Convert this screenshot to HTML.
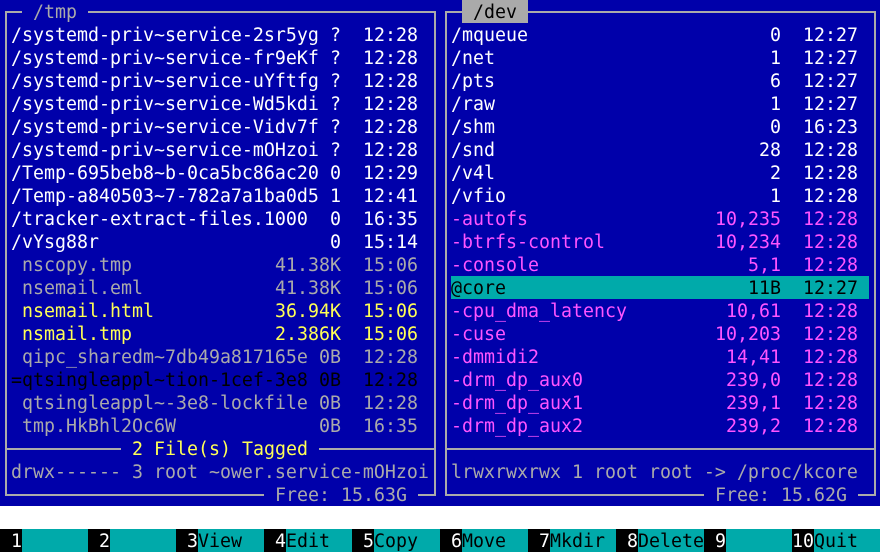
<!DOCTYPE html>
<html><head><meta charset="utf-8"><style>
*{margin:0;padding:0}
body{width:880px;height:552px;background:#fff;position:relative;overflow:hidden;font-family:"DejaVu Sans Mono","Liberation Mono",monospace;font-size:18.27px;line-height:25px}
#blue{position:absolute;left:0;top:0;width:880px;height:506px;background:#0000aa}
.t{position:absolute;height:23px;white-space:pre;overflow:hidden}
.h{position:absolute;height:2px;background:#aaa}
.v{position:absolute;width:2px;background:#aaa}
.w{color:#fff}.g{color:#aaa}.y{color:#ffff55}.m{color:#ff55ff}.k{color:#000}
#bar{position:absolute;left:0;top:529px;width:880px;height:23px}
#bar span{position:absolute;top:0;height:23px;white-space:pre;overflow:hidden}
.n{background:#000;color:#fff}.l{background:#00aaaa;color:#000}
</style></head><body>
<div id="blue"></div>
<div class="h" style="left:5px;top:11px;width:431px"></div>
<div class="h" style="left:5px;top:448px;width:431px"></div>
<div class="h" style="left:5px;top:494px;width:431px"></div>
<div class="v" style="left:5px;top:11px;height:485px"></div>
<div class="v" style="left:434px;top:11px;height:485px"></div>
<div class="h" style="left:445px;top:11px;width:431px"></div>
<div class="h" style="left:445px;top:448px;width:431px"></div>
<div class="h" style="left:445px;top:494px;width:431px"></div>
<div class="v" style="left:445px;top:11px;height:485px"></div>
<div class="v" style="left:874px;top:11px;height:485px"></div>

<div class="t g" style="left:22px;top:0;background:#0000aa"> /tmp </div>
<div class="t k" style="left:462px;top:0;background:#aaa"> /dev </div>

<div class="t w" style="left:11px;top:23px">/systemd-priv~service-2sr5yg</div><div class="t w" style="left:330px;top:23px">?</div><div class="t w" style="left:363px;top:23px">12:28</div>
<div class="t w" style="left:11px;top:46px">/systemd-priv~service-fr9eKf</div><div class="t w" style="left:330px;top:46px">?</div><div class="t w" style="left:363px;top:46px">12:28</div>
<div class="t w" style="left:11px;top:69px">/systemd-priv~service-uYftfg</div><div class="t w" style="left:330px;top:69px">?</div><div class="t w" style="left:363px;top:69px">12:28</div>
<div class="t w" style="left:11px;top:92px">/systemd-priv~service-Wd5kdi</div><div class="t w" style="left:330px;top:92px">?</div><div class="t w" style="left:363px;top:92px">12:28</div>
<div class="t w" style="left:11px;top:115px">/systemd-priv~service-Vidv7f</div><div class="t w" style="left:330px;top:115px">?</div><div class="t w" style="left:363px;top:115px">12:28</div>
<div class="t w" style="left:11px;top:138px">/systemd-priv~service-mOHzoi</div><div class="t w" style="left:330px;top:138px">?</div><div class="t w" style="left:363px;top:138px">12:28</div>
<div class="t w" style="left:11px;top:161px">/Temp-695beb8~b-0ca5bc86ac20</div><div class="t w" style="left:330px;top:161px">0</div><div class="t w" style="left:363px;top:161px">12:29</div>
<div class="t w" style="left:11px;top:184px">/Temp-a840503~7-782a7a1ba0d5</div><div class="t w" style="left:330px;top:184px">1</div><div class="t w" style="left:363px;top:184px">12:41</div>
<div class="t w" style="left:11px;top:207px">/tracker-extract-files.1000</div><div class="t w" style="left:330px;top:207px">0</div><div class="t w" style="left:363px;top:207px">16:35</div>
<div class="t w" style="left:11px;top:230px">/vYsg88r</div><div class="t w" style="left:330px;top:230px">0</div><div class="t w" style="left:363px;top:230px">15:14</div>
<div class="t g" style="left:11px;top:253px"> nscopy.tmp</div><div class="t g" style="left:275px;top:253px">41.38K</div><div class="t g" style="left:363px;top:253px">15:06</div>
<div class="t g" style="left:11px;top:276px"> nsemail.eml</div><div class="t g" style="left:275px;top:276px">41.38K</div><div class="t g" style="left:363px;top:276px">15:06</div>
<div class="t y" style="left:11px;top:299px"> nsemail.html</div><div class="t y" style="left:275px;top:299px">36.94K</div><div class="t y" style="left:363px;top:299px">15:06</div>
<div class="t y" style="left:11px;top:322px"> nsmail.tmp</div><div class="t y" style="left:275px;top:322px">2.386K</div><div class="t y" style="left:363px;top:322px">15:06</div>
<div class="t g" style="left:11px;top:345px"> qipc_sharedm~7db49a817165e</div><div class="t g" style="left:319px;top:345px">0B</div><div class="t g" style="left:363px;top:345px">12:28</div>
<div class="t k" style="left:11px;top:368px">=qtsingleappl~tion-1cef-3e8</div><div class="t k" style="left:319px;top:368px">0B</div><div class="t k" style="left:363px;top:368px">12:28</div>
<div class="t g" style="left:11px;top:391px"> qtsingleappl~-3e8-lockfile</div><div class="t g" style="left:319px;top:391px">0B</div><div class="t g" style="left:363px;top:391px">12:28</div>
<div class="t g" style="left:11px;top:414px"> tmp.HkBhl2Oc6W</div><div class="t g" style="left:319px;top:414px">0B</div><div class="t g" style="left:363px;top:414px">16:35</div>

<div class="t y" style="left:121px;top:437px;background:#0000aa"> 2 File(s) Tagged </div>
<div class="t g" style="left:11px;top:460px">drwx------ 3 root ~ower.service-mOHzoi</div>
<div class="t g" style="left:264px;top:483px;background:#0000aa"> Free: 15.63G </div>

<div class="t w" style="left:451px;top:23px">/mqueue</div><div class="t w" style="left:770px;top:23px">0</div><div class="t w" style="left:803px;top:23px">12:27</div>
<div class="t w" style="left:451px;top:46px">/net</div><div class="t w" style="left:770px;top:46px">1</div><div class="t w" style="left:803px;top:46px">12:27</div>
<div class="t w" style="left:451px;top:69px">/pts</div><div class="t w" style="left:770px;top:69px">6</div><div class="t w" style="left:803px;top:69px">12:27</div>
<div class="t w" style="left:451px;top:92px">/raw</div><div class="t w" style="left:770px;top:92px">1</div><div class="t w" style="left:803px;top:92px">12:27</div>
<div class="t w" style="left:451px;top:115px">/shm</div><div class="t w" style="left:770px;top:115px">0</div><div class="t w" style="left:803px;top:115px">16:23</div>
<div class="t w" style="left:451px;top:138px">/snd</div><div class="t w" style="left:759px;top:138px">28</div><div class="t w" style="left:803px;top:138px">12:28</div>
<div class="t w" style="left:451px;top:161px">/v4l</div><div class="t w" style="left:770px;top:161px">2</div><div class="t w" style="left:803px;top:161px">12:28</div>
<div class="t w" style="left:451px;top:184px">/vfio</div><div class="t w" style="left:770px;top:184px">1</div><div class="t w" style="left:803px;top:184px">12:28</div>
<div class="t m" style="left:451px;top:207px">-autofs</div><div class="t m" style="left:715px;top:207px">10,235</div><div class="t m" style="left:803px;top:207px">12:28</div>
<div class="t m" style="left:451px;top:230px">-btrfs-control</div><div class="t m" style="left:715px;top:230px">10,234</div><div class="t m" style="left:803px;top:230px">12:28</div>
<div class="t m" style="left:451px;top:253px">-console</div><div class="t m" style="left:748px;top:253px">5,1</div><div class="t m" style="left:803px;top:253px">12:28</div>
<div class="t k" style="left:451px;top:276px;width:418px;background:#00aaaa">@core</div><div class="t k" style="left:748px;top:276px">11B</div><div class="t k" style="left:803px;top:276px">12:27</div>
<div class="t m" style="left:451px;top:299px">-cpu_dma_latency</div><div class="t m" style="left:726px;top:299px">10,61</div><div class="t m" style="left:803px;top:299px">12:28</div>
<div class="t m" style="left:451px;top:322px">-cuse</div><div class="t m" style="left:715px;top:322px">10,203</div><div class="t m" style="left:803px;top:322px">12:28</div>
<div class="t m" style="left:451px;top:345px">-dmmidi2</div><div class="t m" style="left:726px;top:345px">14,41</div><div class="t m" style="left:803px;top:345px">12:28</div>
<div class="t m" style="left:451px;top:368px">-drm_dp_aux0</div><div class="t m" style="left:726px;top:368px">239,0</div><div class="t m" style="left:803px;top:368px">12:28</div>
<div class="t m" style="left:451px;top:391px">-drm_dp_aux1</div><div class="t m" style="left:726px;top:391px">239,1</div><div class="t m" style="left:803px;top:391px">12:28</div>
<div class="t m" style="left:451px;top:414px">-drm_dp_aux2</div><div class="t m" style="left:726px;top:414px">239,2</div><div class="t m" style="left:803px;top:414px">12:28</div>

<div class="t g" style="left:451px;top:460px">lrwxrwxrwx 1 root root -&gt; /proc/kcore</div>
<div class="t g" style="left:704px;top:483px;background:#0000aa"> Free: 15.62G </div>

<div id="bar">
<span class="n" style="left:0;width:22px"> 1</span><span class="l" style="left:22px;width:66px"></span>
<span class="n" style="left:88px;width:22px"> 2</span><span class="l" style="left:110px;width:66px"></span>
<span class="n" style="left:176px;width:22px"> 3</span><span class="l" style="left:198px;width:66px">View</span>
<span class="n" style="left:264px;width:22px"> 4</span><span class="l" style="left:286px;width:66px">Edit</span>
<span class="n" style="left:352px;width:22px"> 5</span><span class="l" style="left:374px;width:66px">Copy</span>
<span class="n" style="left:440px;width:22px"> 6</span><span class="l" style="left:462px;width:66px">Move</span>
<span class="n" style="left:528px;width:22px"> 7</span><span class="l" style="left:550px;width:66px">Mkdir</span>
<span class="n" style="left:616px;width:22px"> 8</span><span class="l" style="left:638px;width:66px">Delete</span>
<span class="n" style="left:704px;width:22px"> 9</span><span class="l" style="left:726px;width:66px"></span>
<span class="n" style="left:792px;width:22px">10</span><span class="l" style="left:814px;width:66px">Quit</span>
</div>
</body></html>
